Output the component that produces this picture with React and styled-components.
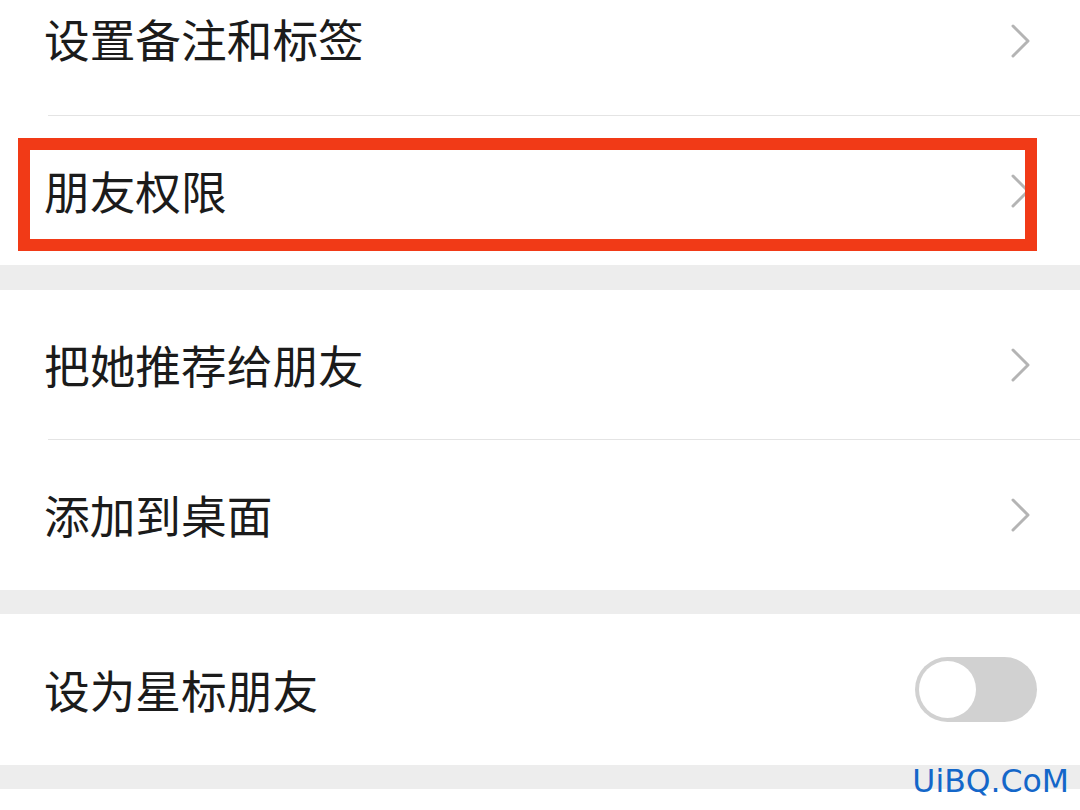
import React from "react"
import styled, { createGlobalStyle } from "styled-components"

const GlobalStyle = createGlobalStyle`
  html, body {
    margin: 0;
    padding: 0;
    background: #ffffff;
    overflow: hidden;
  }
  body {
    font-family: "Noto Sans CJK SC", "Noto Sans", sans-serif;
  }
`

const Page = styled.div`
  width: 1080px;
  height: 810px;
  position: relative;
  overflow: hidden;
  background: #ededed;
`

const Section = styled.section`
  background: #ffffff;
  margin-top: ${p => p.$top}px;
  margin-bottom: ${p => p.$bottom || 24}px;
  position: relative;
`

const Row = styled.div`
  height: ${p => p.$h || 149}px;
  display: flex;
  align-items: center;
  justify-content: space-between;
  padding: 0 44px 0 44px;
  position: relative;
`

const Label = styled.span`
  font-size: 45.7px;
  color: #1b1b1b;
  line-height: 1;
  margin-top: ${p => p.$shift || 0}px;
`

const Divider = styled.div`
  height: 1px;
  margin-left: 48px;
  background: #e4e4e4;
`

const Chevron = styled.svg`
  width: 22px;
  height: 36px;
  margin-right: 4px;
  flex: none;
`

const Highlight = styled.div`
  position: absolute;
  left: 18px;
  top: 22px;
  width: 1019px;
  height: 113px;
  box-sizing: border-box;
  border: 12px solid #f13a17;
`

const Toggle = styled.div`
  width: 122px;
  height: 65px;
  border-radius: 33px;
  background: #d1d1d1;
  box-sizing: border-box;
  padding: 4px;
  margin-right: -1px;
  display: flex;
  align-items: center;
`

const Knob = styled.div`
  width: 57px;
  height: 57px;
  border-radius: 50%;
  background: #ffffff;
`

const Footer = styled.div`
  height: 40px;
  background: #ffffff;
`

const Watermark = styled.div`
  position: absolute;
  right: 11px;
  bottom: 13px;
  font-family: "DejaVu Sans", sans-serif;
  font-size: 31.5px;
  line-height: 1;
  color: #1467c9;
`

const Arrow = () => (
  <Chevron viewBox="0 0 22 36">
    <polyline
      points="3,3 18,18 3,33"
      fill="none"
      stroke="#b4b4b4"
      strokeWidth="3"
      strokeLinecap="round"
      strokeLinejoin="round"
    />
  </Chevron>
)

const App = () => {
  return (
    <Page>
      <GlobalStyle />
      <Section $top={-34} $bottom={25}>
        <Row>
          <Label $shift={-3}>设置备注和标签</Label>
          <Arrow />
        </Row>
        <Divider />
        <Row>
          <Label>朋友权限</Label>
          <Arrow />
          <Highlight />
        </Row>
      </Section>
      <Section $top={0}>
        <Row>
          <Label>把她推荐给朋友</Label>
          <Arrow />
        </Row>
        <Divider />
        <Row $h={150}>
          <Label>添加到桌面</Label>
          <Arrow />
        </Row>
      </Section>
      <Section $top={0}>
        <Row $h={151}>
          <Label>设为星标朋友</Label>
          <Toggle>
            <Knob />
          </Toggle>
        </Row>
      </Section>
      <Footer />
      <Watermark>UiBQ.CoM</Watermark>
    </Page>
  )
}

export default App
